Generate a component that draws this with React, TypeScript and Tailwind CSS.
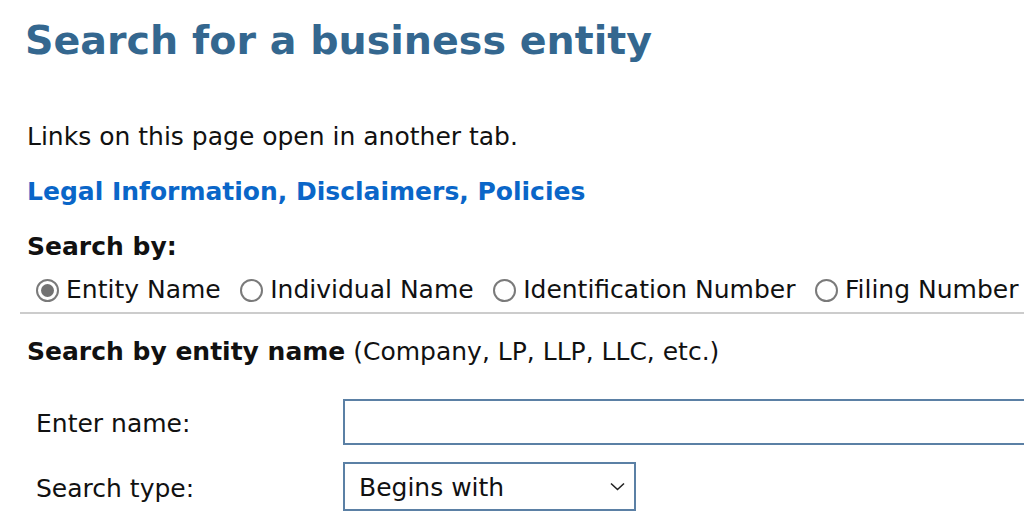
import { useState } from 'react'

const OPTIONS = ['Entity Name', 'Individual Name', 'Identification Number', 'Filing Number']

function Radio({ checked }: { checked: boolean }) {
    return (
        <span className="mr-[7px] flex h-[23px] w-[23px] shrink-0 items-center justify-center rounded-full border-2 border-[#7a7a7a] bg-white">
            {checked && <span className="h-[13px] w-[13px] rounded-full bg-[#727272]" />}
        </span>
    )
}

export default function App() {
    const [by, setBy] = useState('Entity Name')
    const [name, setName] = useState('')

    return (
        <div className="h-[521px] w-[1024px] overflow-hidden bg-white font-['DejaVu_Sans',Verdana,sans-serif] text-[25px] text-[#111]">
            <div className="pl-[25px] pt-[15px]">
                <h1 className="text-[39.6px] font-bold leading-[50px] text-[#34678f]">Search for a business entity</h1>
            </div>

            <div className="pl-[27px]">
                <p className="mt-[57px] leading-[30px]">Links on this page open in another tab.</p>
                <a href="#" className="mt-[25px] block font-bold leading-[30px] text-[#0a66c8]">
                    Legal Information, Disclaimers, Policies
                </a>
                <div className="mt-[25px] font-bold leading-[30px]">Search by:</div>
            </div>

            <div className="mt-[13px] flex h-[30px] items-center gap-[19.5px] pl-[36px]">
                {OPTIONS.map((o) => (
                    <label key={o} className="flex items-center whitespace-nowrap" onClick={() => setBy(o)}>
                        <Radio checked={by === o} />
                        {o}
                    </label>
                ))}
            </div>

            <div className="ml-[20px] mt-[7px] h-[2px] bg-[#cccccc]" />

            <div className="mt-[23px] whitespace-nowrap pl-[27px] leading-[30px]">
                <span className="font-bold">Search by entity name</span> (Company, LP, LLP, LLC, etc.)
            </div>

            <div className="mt-[32px] flex items-center pl-[36px]">
                <label className="w-[307px] shrink-0 pt-[3px]">Enter name:</label>
                <input
                    value={name}
                    onChange={(e) => setName(e.target.value)}
                    className="h-[46px] w-[700px] shrink-0 border-2 border-[#5b80a5] px-[12px] outline-none"
                />
            </div>

            <div className="mt-[17px] flex items-center pl-[36px]">
                <label className="w-[307px] shrink-0 pt-[4px]">Search type:</label>
                <div className="flex h-[49px] w-[293px] items-center justify-between border-2 border-[#5b80a5] pl-[14px] pr-[9px]">
                    <span className="pt-[3px]">Begins with</span>
                    <svg width="15" height="9" viewBox="0 0 15 9" fill="none" stroke="#222" strokeWidth="1.6">
                        <path d="M1 1.5l6.5 6 6.5-6" />
                    </svg>
                </div>
            </div>
        </div>
    )
}
